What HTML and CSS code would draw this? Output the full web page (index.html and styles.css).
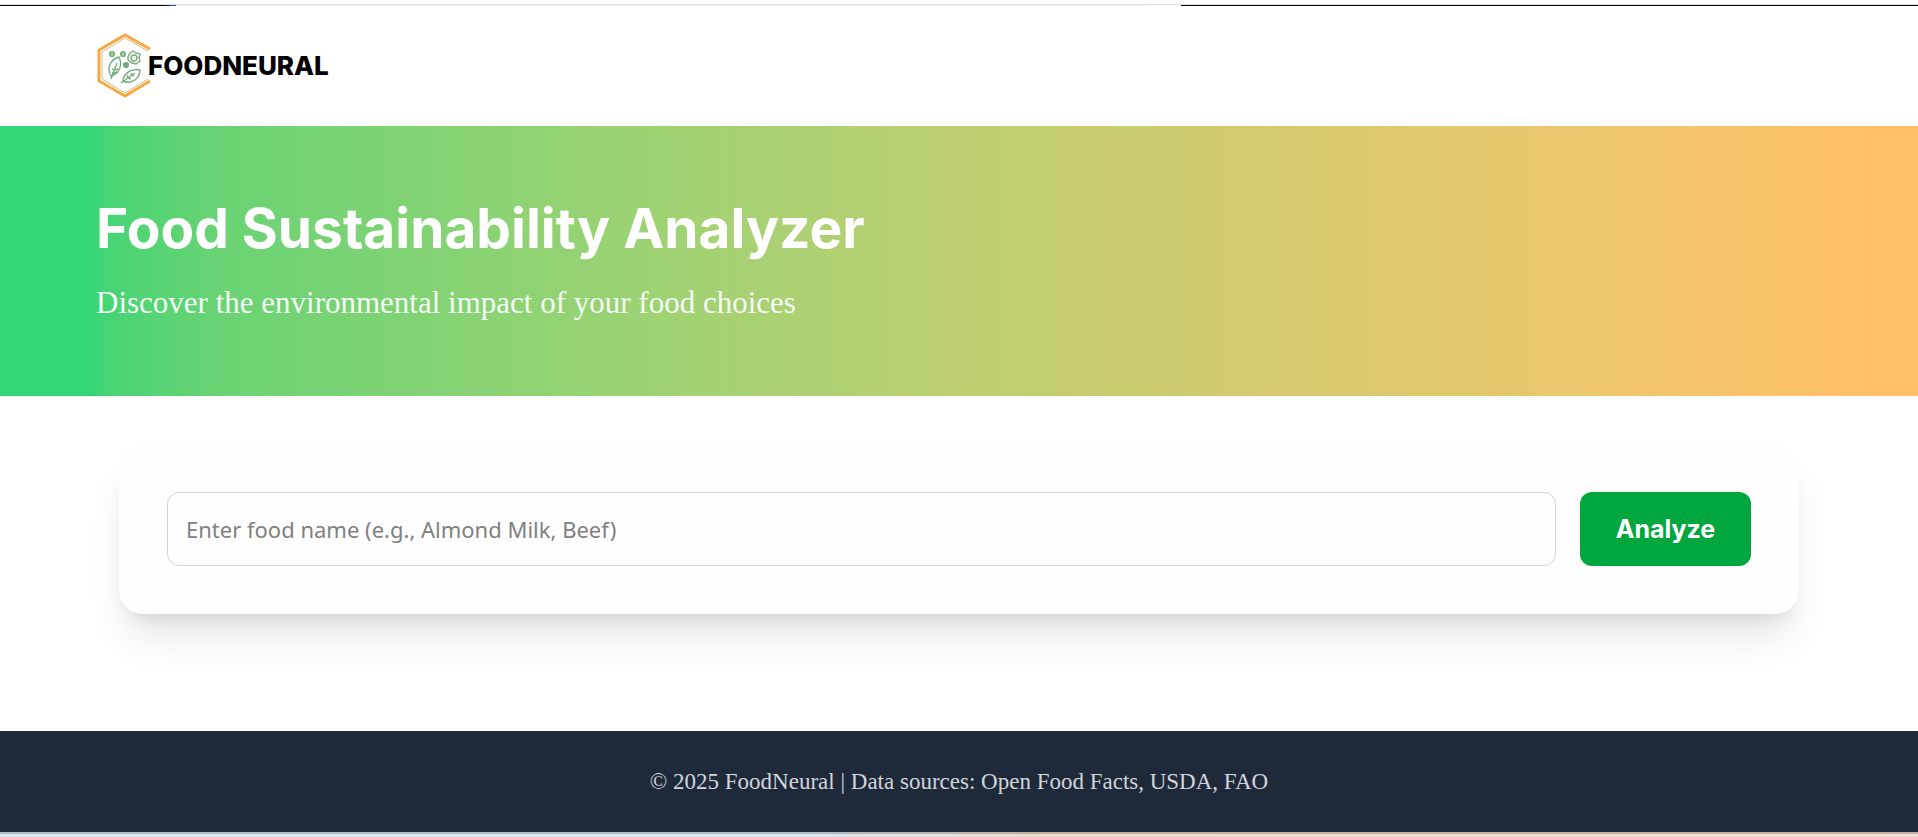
FILE: index.html
```html
<!DOCTYPE html>
<html lang="en">
<head>
<meta charset="utf-8">
<title>FoodNeural</title>
<link rel="stylesheet" href="styles.css">
</head>
<body>
<div class="edge-top"></div>
<header class="header">
  <a class="logo" href="#" aria-label="FoodNeural">
    <svg class="logo-mark" viewBox="0 0 56 66" fill="none" aria-hidden="true">
      <path d="M55 16 30 2 4 17V48L30 63 55 48" stroke="#f7a83e" stroke-width="3"/>
      <path d="M53 18 30 5 7 19V46L30 60 53 46" stroke="#d9b98d" stroke-width="1"/>
      <g stroke="#74ad7a" stroke-width="1.4">
        <circle cx="17" cy="21" r="2.4" fill="#a5cca8"/>
        <circle cx="28" cy="21" r="2.4" fill="#a5cca8"/>
        <circle cx="31" cy="32" r="2.4" fill="#74ad7a"/>
        <path d="M35 20 38 18 41 20 45 21 44 25 45 28 41 31 37 30 33 27 33 24Z"/>
        <circle cx="39" cy="25" r="3"/>
        <path d="M24 24C14 27 12 36 16 43C24 41 28 32 24 24ZM16 46 22 30M17 36 20 37 23 36M17 40 19 40 22 39"/>
        <path d="M45 37C36 35 28 41 28 48C37 52 45 45 45 37ZM26 50 40 40M32 42 33 45 36 46M36 40 37 42 39 43"/>
      </g>
    </svg>
    <span class="logo-name">FOODNEURAL</span>
  </a>
</header>
<section class="hero">
  <h1 class="hero-title">Food Sustainability Analyzer</h1>
  <p class="hero-text">Discover the environmental impact of your food choices</p>
</section>
<main class="main">
  <form class="card">
    <input class="field" type="text" aria-label="Food name" placeholder="Enter food name (e.g., Almond Milk, Beef)">
    <button class="button" type="button">Analyze</button>
  </form>
</main>
<footer class="footer">© 2025 FoodNeural | Data sources: Open Food Facts, USDA, FAO</footer>
<div class="edge-bottom"></div>
</body>
</html>
```
FILE: styles.css
```css
* { box-sizing: border-box; }
body {
  margin: 0;
  min-height: 100vh;
  display: flex;
  flex-direction: column;
  background: #fff;
  font-family: "Liberation Serif", serif;
}
.edge-top {
  height: 6px;
  background:
    linear-gradient(90deg, #000 160px, #222 170px, #1d5bb5 170px 176px, #f0f0f0 176px 1145px, #fff 1145px 1181px, #000 1181px) 0 5px / 100% 1px no-repeat,
    linear-gradient(#e0e0e0, #e0e0e0) 0 4px / 100% 1px no-repeat;
}
.header {
  display: flex;
  padding: 27px 95px;
}
.logo {
  display: flex;
  align-items: center;
  color: #000;
  text-decoration: none;
}
.logo-mark { width: 56px; height: 66px; flex: none; }
.logo-name {
  margin-left: -3px;
  font: 800 26px/30px Inter, sans-serif;
}
.hero {
  padding: 72px 96px;
  color: #fff;
  background: linear-gradient(90deg, #33d575 0, #33d575 90px, #48d474 110px, #6ad374 220px, #a0d273 35%, #c0ce71 52%, #e2c86d 75%, #ffc067 98%);
}
.hero-title {
  margin: 0;
  font: 700 55px/60px Inter, sans-serif;
}
.hero-text {
  margin: 24px 0 0;
  font-size: 31px;
  line-height: 42px;
  color: #f4fdf6;
}
.main { flex: 1; padding: 48px 119px 117px; }
.card {
  display: flex;
  gap: 24px;
  padding: 48px;
  border-radius: 24px;
  background: #fefefe;
  box-shadow: 0 30px 38px -8px rgba(0, 0, 0, .1), 0 12px 15px -9px rgba(0, 0, 0, .1);
}
.field {
  flex: 1;
  min-width: 0;
  height: 74px;
  padding: 0 18px;
  border: 1px solid #d1d5dc;
  border-radius: 12px;
  background: #fefefe;
  font: 22px "Noto Sans", sans-serif;
}
.field::placeholder { color: #808080; }
.button {
  width: 171px;
  border: 0;
  border-radius: 12px;
  background: #00a63e;
  color: #fff;
  font: 700 25px Inter, sans-serif;
}
.footer {
  padding: 36px 96px 35px;
  background: #1e2939;
  color: #d1d5dc;
  font-size: 23px;
  line-height: 30px;
  text-align: center;
}
.edge-bottom {
  height: 5px;
  background:
    linear-gradient(rgba(0, 0, 0, .2), rgba(0, 0, 0, .2)) 0 0 / 100% 2px no-repeat,
    linear-gradient(90deg, #dbe6f3 0, #dbe6f0 42%, #ecdccb 55%, #f0dfcf 100%);
}
```
